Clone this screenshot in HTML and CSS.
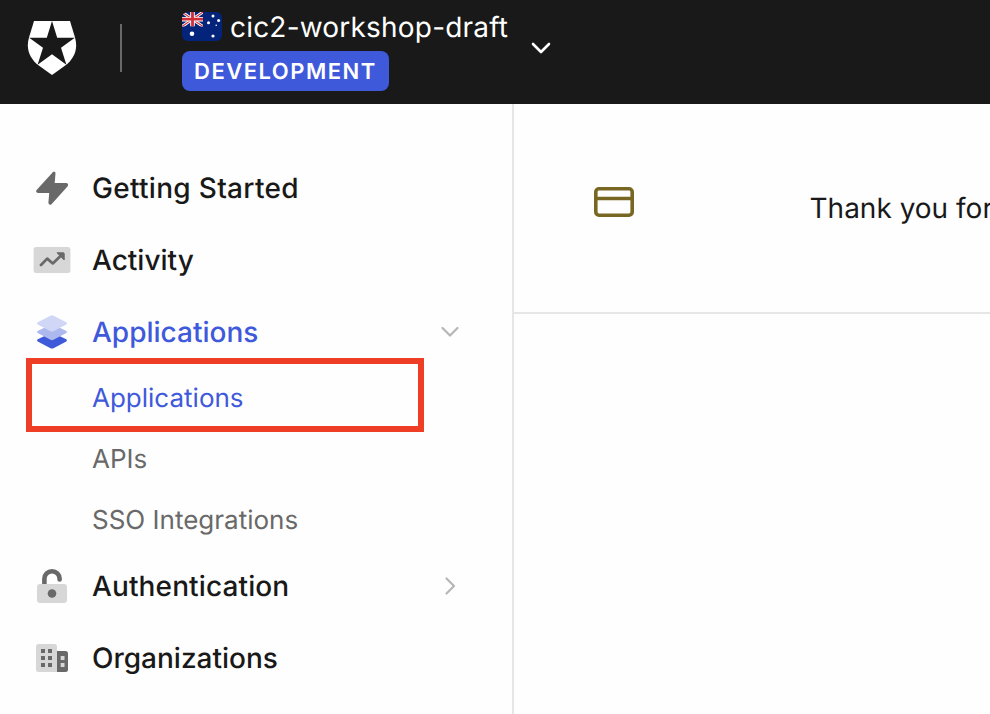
FILE: index.html
```
<!DOCTYPE html>
<html lang="en">
<head>
<meta charset="utf-8">
<title>Dashboard</title>
<link rel="stylesheet" href="styles.css">
</head>
<body>
<header class="topbar">
  <svg class="logo" viewBox="26 20 52 56" aria-hidden="true">
    <path fill="#fff" d="M34 21H70L75 37.5C79 51 72 60 66.3 64.7L52 75L37.7 64.7C32 60 25 51 29 37.5Z"/>
    <path fill="#191919" d="M52 21L57.2 37.8H74.8L61 47.8L66.4 64.7L52 54.2L37.6 64.7L43 47.8L29.2 37.8H46.8Z"/>
  </svg>
  <div class="divider"></div>
  <div class="tenant">
    <div class="tenant-row">
      <svg class="flag" viewBox="0 0 40 29" aria-hidden="true">
        <defs>
          <clipPath id="flag-shape"><rect width="40" height="29" rx="6"/></clipPath>
          <clipPath id="canton"><rect width="21" height="14.5"/></clipPath>
        </defs>
        <g clip-path="url(#flag-shape)">
          <rect width="40" height="29" fill="#04247c"/>
          <g clip-path="url(#canton)">
            <path d="M-1 -.7L22 15.2M22 -.7L-1 15.2" stroke="#fff" stroke-width="3"/>
            <path d="M-1 -.7L22 15.2M22 -.7L-1 15.2" stroke="#d03a40" stroke-width="1.1"/>
            <path d="M10.5 0V14.5M0 7.2H21" stroke="#fff" stroke-width="4.6"/>
            <path d="M10.5 0V14.5M0 7.2H21" stroke="#cf2f38" stroke-width="2.8"/>
          </g>
          <g fill="#fff">
            <circle cx="10" cy="21.7" r="2.3"/>
            <circle cx="31" cy="4" r="1.5"/><circle cx="26.5" cy="10.8" r="1.5"/>
            <circle cx="36.6" cy="8.5" r="1.5"/><circle cx="31" cy="24" r="1.6"/>
            <circle cx="34.2" cy="13.2" r=".8"/>
          </g>
        </g>
      </svg>
      <span class="tenant-name">cic2-workshop-draft</span>
    </div>
    <span class="env">DEVELOPMENT</span>
  </div>
  <svg class="tenant-chevron" viewBox="0 0 24 24" aria-hidden="true"><path d="M4 8L12 16L20 8"/></svg>
</header>
<div class="layout">
  <nav class="sidebar">
    <a class="item">
      <svg class="icon" viewBox="32 168 40 40"><path d="M53 171.9L36.6 190Q35.2 192.5 38 192.9H49.2L48.4 203Q49.1 205.8 51.5 204.2L67.7 186.2Q69 183.3 66 183H54.7L55.5 173Q55 170.5 53 171.9Z" fill="#696969"/></svg>
      <span class="loose">Getting Started</span>
    </a>
    <a class="item">
      <svg class="icon" viewBox="32 240 40 40"><rect x="33.6" y="247" width="36.8" height="26" rx="2.5" fill="#d7d7d7"/><path d="M41 265L47.2 258.6L52.8 263.4L61 255.6" fill="none" stroke="#696969" stroke-width="2.7" stroke-linecap="round" stroke-linejoin="round"/><path d="M57 252.8H63.2Q64.2 252.8 64.2 253.8V260Z" fill="#696969" stroke="#696969" stroke-linejoin="round"/></svg>
      <span>Activity</span>
    </a>
    <a class="item active">
      <svg class="icon" viewBox="32 312 40 40"><path d="M37.7 339.3L51 332.9Q52 332.5 53 332.9L66.3 339.3Q67.7 340.3 66.3 341.4L53.5 348.2Q52 349 50.5 348.2L37.7 341.4Q36.3 340.3 37.7 339.3Z" fill="#3f59db"/><path d="M37.7 330.9L51 324.5Q52 324 53 324.5L66.3 330.9Q67.7 331.9 66.3 333L53.5 339.8Q52 340.6 50.5 339.8L37.7 333Q36.3 331.9 37.7 330.9Z" fill="#adb8ee"/><path d="M37.7 322.3L50.5 315.7Q52 315 53.5 315.7L66.3 322.3Q67.7 323.4 66.3 324.5L53.5 331.2Q52 332 50.5 331.2L37.7 324.5Q36.3 323.4 37.7 322.3Z" fill="#cfd6f6"/></svg>
      <span>Applications</span>
      <svg class="caret" viewBox="0 0 24 24"><path d="M4.5 8L12 15.5L19.5 8"/></svg>
    </a>
    <div class="sub">
      <a class="subitem selected"><span>Applications</span></a>
      <a class="subitem"><span>APIs</span></a>
      <a class="subitem"><span>SSO Integrations</span></a>
      <div class="highlight"></div>
    </div>
    <a class="item">
      <svg class="icon" viewBox="32 566 40 40"><path d="M44.4 586V578.8A7.6 7.6 0 0 1 59.6 578.8V579.4" fill="none" stroke="#696969" stroke-width="4.6" stroke-linecap="round"/><rect x="37" y="584" width="30" height="19" rx="3" fill="#d7d7d7"/><circle cx="52" cy="593.5" r="4.3" fill="#696969"/></svg>
      <span class="snug">Authentication</span>
      <svg class="caret" viewBox="0 0 24 24"><path d="M8.5 4.5L16 12L8.5 19.5"/></svg>
    </a>
    <a class="item">
      <svg class="icon" viewBox="32 638 40 40"><path d="M57 651H65.5Q68 651 68 653.5V669.5Q68 672 65.5 672H57Z" fill="#696969"/><path d="M38.5 644H54.5Q57 644 57 646.5V672H38.5Q36 672 36 669.5V646.5Q36 644 38.5 644Z" fill="#d7d7d7"/><path fill="#696969" d="M41 649h4v4h-4zM48 649h4v4h-4zM41 656h4v4h-4zM48 656h4v4h-4zM41 663h4v4h-4zM48 663h4v4h-4z"/><path fill="#d7d7d7" d="M60.7 656h3.8v4h-3.8zM60.7 663h3.8v4h-3.8z"/></svg>
      <span>Organizations</span>
    </a>
  </nav>
  <main class="content">
    <div class="notice">
      <svg class="card-icon" viewBox="0 0 40 30"><rect x="1.8" y="1.8" width="36.4" height="26.4" rx="3.2"/><path d="M2 11.5H38"/></svg>
      <span class="notice-text">Thank you for</span>
    </div>
  </main>
</div>
</body>
</html>
```
FILE: styles.css
```
* { box-sizing: border-box; }
body {
  margin: 0;
  height: 714px;
  overflow: hidden;
  display: flex;
  flex-direction: column;
  background: #fefefe;
  color: #191919;
  font-family: Inter, "Liberation Sans", sans-serif;
  text-rendering: geometricPrecision;
}
svg { display: block; flex: none; }
.topbar {
  display: flex;
  flex: none;
  height: 104px;
  background: #191919;
  color: #fff;
}
.logo { width: 52px; height: 56px; margin: 20px 0 0 26px; }
.divider { width: 2px; height: 48px; margin: 24px 0 0 42px; background: #696969; }
.tenant { width: 326px; margin-left: 60px; padding-top: 3px; }
.tenant-row { display: flex; height: 48px; gap: 8px; }
.flag { width: 40px; height: 29px; margin-top: 9px; }
.tenant-name { font-size: 28px; line-height: 48px; letter-spacing: 0.2px; white-space: nowrap; }
.env {
  display: block;
  width: 207px;
  height: 40px;
  border-radius: 8px;
  background: #3f59db;
  padding-left: 12px;
  font-size: 22px;
  font-weight: 600;
  line-height: 42px;
  letter-spacing: 1.5px;
}
.tenant-chevron { width: 24px; height: 24px; margin: 36px 0 0 21px; fill: none; stroke: #fff; stroke-width: 2.6; stroke-linecap: round; stroke-linejoin: round; }
.layout { display: flex; flex: 1; min-height: 0; }
.sidebar { width: 514px; flex: none; padding-top: 48px; border-right: 2px solid #e6e6e6; }
.item {
  display: flex;
  align-items: center;
  height: 72px;
  padding: 0 50px 0 32px;
  gap: 20px;
  font-size: 28px;
  font-weight: 500;
}
.loose { letter-spacing: 0.3px; }
.snug { letter-spacing: 0.12px; }
.icon { width: 40px; height: 40px; }
.active { color: #3f59db; }
.caret { width: 24px; height: 24px; margin-left: auto; fill: none; stroke: #b6b6b6; stroke-width: 2.2; stroke-linecap: round; stroke-linejoin: round; }
.sub { position: relative; height: 182px; padding-top: 1px; display: grid; grid-template-rows: 59px 62px 60px; }
.subitem { display: flex; align-items: center; padding-left: 92px; font-size: 26px; color: #696969; }
.selected { color: #3f59db; }
.highlight { position: absolute; left: 26px; top: -10px; width: 398px; height: 74px; border: 6px solid #ee3e25; }
.content { flex: 1; min-width: 0; }
.notice { display: flex; height: 210px; padding-left: 80px; border-bottom: 2px solid #e6e6e6; overflow: hidden; }
.card-icon { width: 40px; height: 30px; margin-top: 83px; fill: none; stroke: #786722; stroke-width: 3.6; }
.notice-text { margin: 84px 0 0 175.5px; font-size: 28px; line-height: 40px; white-space: nowrap; }
```
